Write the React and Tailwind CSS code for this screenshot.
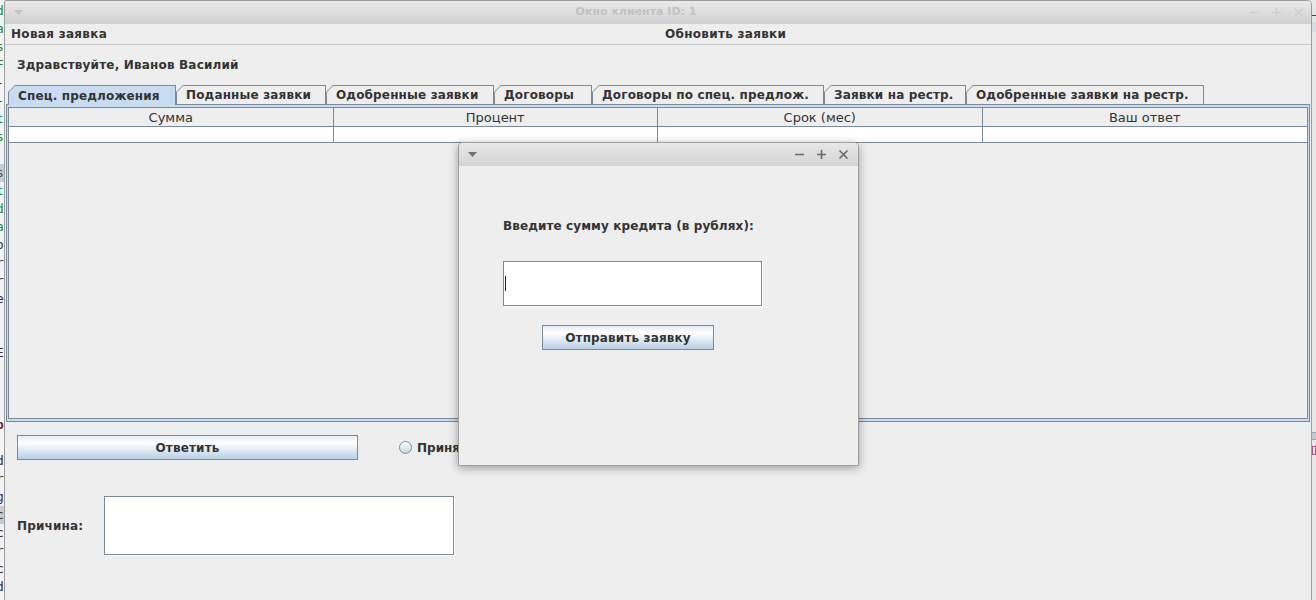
import React from "react";

const F = { fontFamily: '"DejaVu Sans", "Liberation Sans", sans-serif' };

const tabs = [
  { label: "Спец. предложения", w: "w-[168px]", sel: true },
  { label: "Поданные заявки", w: "w-[150px]" },
  { label: "Одобренные заявки", w: "w-[168px]" },
  { label: "Договоры", w: "w-[98px]" },
  { label: "Договоры по спец. предлож.", w: "w-[232px]" },
  { label: "Заявки на рестр.", w: "w-[142px]" },
  { label: "Одобренные заявки на рестр.", w: "w-[238px]" },
];

const codeLines = [
  ["d", "text-[#2e8b2e]"],
  ["a", "text-[#2e8b2e]"],
  ["s", "text-[#2e8b2e]"],
  ["F", "text-[#2e8b2e]"],
  ["-", "text-[#333]"],
  ["-", "text-[#333]"],
  ["t", "text-[#2e8b2e]"],
  ["s", "text-[#2e8b2e]"],
  [" ", ""],
  ["s", "text-[#555] bg-[#c8ccd4]"],
  ["t", "text-[#2e8b2e]"],
  ["d", "text-[#2e8b2e]"],
  ["a", "text-[#2e8b2e]"],
  ["o", "text-[#333]"],
  ["r", "text-[#333]"],
  ["r", "text-[#333]"],
  ["e", "text-[#333]"],
  [" ", ""],
  [" ", ""],
  ["E", "text-[#333]"],
  [" ", ""],
  [" ", ""],
  [" ", ""],
  ["p", "text-[#7a1f1f] font-bold"],
  [" ", ""],
  ["d", "text-[#333]"],
  ["r", "text-[#333]"],
  ["g", "text-[#333]"],
  ["c", "text-[#333] bg-[#c8ccd4]"],
  ["c", "text-[#333]"],
  ["r", "text-[#333]"],
  ["c", "text-[#333]"],
  ["d", "text-[#333]"],
];

function Btn({ children, className }) {
  return (
    <div
      className={
        "flex items-center justify-center border border-[#7a8a99] bg-[linear-gradient(to_bottom,#e4edf6_0%,#ffffff_30%,#b8cfe5_100%)] text-[12px] font-bold tracking-[0.15px] text-[#333] " +
        className
      }
    >
      {children}
    </div>
  );
}

function Tab({ label, w, sel }) {
  return (
    <div
      className={
        w +
        " bg-[#7a8a99] pt-[1px] px-[1px] [clip-path:polygon(0_7px,7px_0,100%_0,100%_100%,0_100%)] " +
        (sel ? "relative z-10 -mb-[1px] h-[20px]" : "h-[19px]")
      }
    >
      <div
        className={
          "h-full flex items-center pl-[9px] text-[12px] font-bold tracking-[0.15px] text-[#333] whitespace-nowrap [clip-path:polygon(0_6px,6px_0,100%_0,100%_100%,0_100%)] " +
          (sel ? "bg-[#c8ddf2]" : "bg-[#eeeeee]")
        }
      >
        {label}
      </div>
    </div>
  );
}

function TitleButtons({ color }) {
  return (
    <div className={"flex items-center gap-[9px] " + color}>
      <svg width="13" height="13" viewBox="0 0 13 13">
        <path d="M2 6.5h9" stroke="currentColor" strokeWidth="1.6" />
      </svg>
      <svg width="13" height="13" viewBox="0 0 13 13">
        <path d="M2 6.5h9M6.5 2v9" stroke="currentColor" strokeWidth="1.6" />
      </svg>
      <svg width="13" height="13" viewBox="0 0 13 13">
        <path d="M2.5 2.5l8 8M10.5 2.5l-8 8" stroke="currentColor" strokeWidth="1.6" />
      </svg>
    </div>
  );
}

export default function App() {
  return (
    <div className="relative w-[1316px] h-[600px] overflow-hidden flex bg-[#e4e4e4]" style={F}>
      {/* left background strip (code editor) */}
      <div className="w-[4px] h-full overflow-hidden bg-[#f4f4f4] flex flex-col pt-[2px] shrink-0">
        {codeLines.map(([c, cls], i) => (
          <div
            key={i}
            className={"h-[18px] leading-[18px] text-[13px] -ml-[4px] " + cls}
            style={{ fontFamily: '"DejaVu Sans Mono", monospace' }}
          >
            {c}
          </div>
        ))}
      </div>

      {/* main window */}
      <div className="w-[1308px] h-full shrink-0 flex flex-col border-l border-r border-t border-[#9c9c9c] rounded-tr-[5px] rounded-tl-[3px] bg-[#eeeeee] overflow-hidden">
        {/* title bar */}
        <div className="h-[23px] shrink-0 flex items-center bg-[linear-gradient(to_bottom,#e9e9e9,#d2d2d2)]">
          <div className="w-[76px] flex pl-[9px] text-[#c4c4c4]">
            <svg width="9" height="6" viewBox="0 0 9 6">
              <path d="M0 0h9L4.5 5z" fill="currentColor" />
            </svg>
          </div>
          <div className="flex-1 text-center text-[11px] font-bold text-[#c2c2c2] pr-[44px]">Окно клиента ID: 1</div>
          <div className="w-[76px] flex justify-end pr-[6px]">
            <TitleButtons color="text-[#cdcdcd]" />
          </div>
        </div>

        {/* menu bar */}
        <div className="h-[21px] shrink-0 grid grid-cols-2 items-center border-b border-[#c8c8c8] text-[12px] font-bold tracking-[0.3px] text-[#333]">
          <div className="pl-[6px]">Новая заявка</div>
          <div className="pl-[7px]">Обновить заявки</div>
        </div>

        {/* greeting */}
        <div className="h-[40px] shrink-0 flex items-center pl-[12px] text-[12px] font-bold tracking-[0.18px] text-[#333]">
          Здравствуйте, Иванов Василий
        </div>

        {/* tabs */}
        <div className="flex items-end pl-[3px] shrink-0">
          {tabs.map((t) => (
            <Tab key={t.label} {...t} />
          ))}
        </div>

        {/* tab panel */}
        <div className="mx-[1px] h-[318px] shrink-0 border border-[#7a8a99] bg-[#c8ddf2] pt-[2px] px-[1px] pb-[2px] flex">
          <div className="flex-1 border border-[#7a8a99] bg-[#eeeeee] flex flex-col">
            <div className="grid grid-cols-4 h-[19px] border-b border-[#7a8a99] text-[13px] text-[#333]">
              <div className="flex items-center justify-center border-r border-[#7a8a99]">Сумма</div>
              <div className="flex items-center justify-center border-r border-[#7a8a99]">Процент</div>
              <div className="flex items-center justify-center border-r border-[#7a8a99]">Срок (мес)</div>
              <div className="flex items-center justify-center">Ваш ответ</div>
            </div>
            <div className="grid grid-cols-4 h-[16px] border-b border-[#7a8a99] bg-white">
              <div className="border-r border-[#7a8a99]" />
              <div className="border-r border-[#7a8a99]" />
              <div className="border-r border-[#7a8a99]" />
              <div />
            </div>
          </div>
        </div>

        {/* bottom controls */}
        <div className="flex items-center pl-[12px] pt-[13px] shrink-0">
          <Btn className="w-[341px] h-[25px]">Ответить</Btn>
          <div className="flex items-center ml-[41px] gap-[5px] text-[12px] font-bold text-[#333]">
            <div className="w-[13px] h-[13px] rounded-full border border-[#7a8a99] bg-[linear-gradient(to_bottom,#ffffff,#c8d4e0)]" />
            <span>Принять</span>
            <div className="ml-[20px] w-[13px] h-[13px] rounded-full border border-[#7a8a99] bg-[linear-gradient(to_bottom,#ffffff,#c8d4e0)]" />
            <span>Отклонить</span>
          </div>
        </div>

        <div className="flex items-center pl-[12px] pt-[36px] shrink-0">
          <div className="w-[87px] text-[12px] font-bold tracking-[0.15px] text-[#333]">Причина:</div>
          <div className="w-[350px] h-[59px] border border-[#7a8a99] bg-white shadow-[1px_1px_0_#ffffff]" />
        </div>
      </div>

      {/* right background strip */}
      <div className="w-[4px] h-full shrink-0 bg-[#e6e6e6] flex flex-col">
        <div className="h-[15px]" />
        <div className="h-[1px] bg-[#444]" />
        <div className="h-[6px]" />
        <div className="h-[10px] bg-[#dadde2]" />
        <div className="h-[400px]" />
        <div className="h-[8px] bg-[#c8c8c8] border-y border-[#9aa6b4]" />
        <div className="h-[6px]" />
        <div className="h-[9px] border border-[#a05a7a]" />
      </div>

      {/* dialog */}
      <div className="absolute left-[458px] top-[142px] w-[401px] h-[324px] flex flex-col border border-[#9e9e9e] rounded-t-[5px] bg-[#eeeeee] shadow-[0_2px_10px_rgba(0,0,0,0.35)] overflow-hidden">
        <div className="h-[23px] shrink-0 flex items-center justify-between bg-[linear-gradient(to_bottom,#e8e8e8,#d4d4d4)]">
          <div className="pl-[9px] text-[#707070]">
            <svg width="9" height="6" viewBox="0 0 9 6">
              <path d="M0 0h9L4.5 5z" fill="currentColor" />
            </svg>
          </div>
          <div className="pr-[8px]">
            <TitleButtons color="text-[#6a6a6a]" />
          </div>
        </div>
        <div className="flex flex-col pl-[44px]">
          <div className="pt-[53px] h-[71px] text-[12px] font-bold tracking-[0.1px] text-[#333] leading-[14px]">
            Введите сумму кредита (в рублях):
          </div>
          <div className="mt-[24px] w-[259px] h-[45px] border border-[#7a8a99] bg-white shadow-[1px_1px_0_#ffffff] flex items-center pl-[1px]">
            <div className="w-[1px] h-[15px] bg-[#222]" />
          </div>
          <Btn className="mt-[19px] ml-[39px] w-[172px] h-[25px]">Отправить заявку</Btn>
        </div>
      </div>
    </div>
  );
}
